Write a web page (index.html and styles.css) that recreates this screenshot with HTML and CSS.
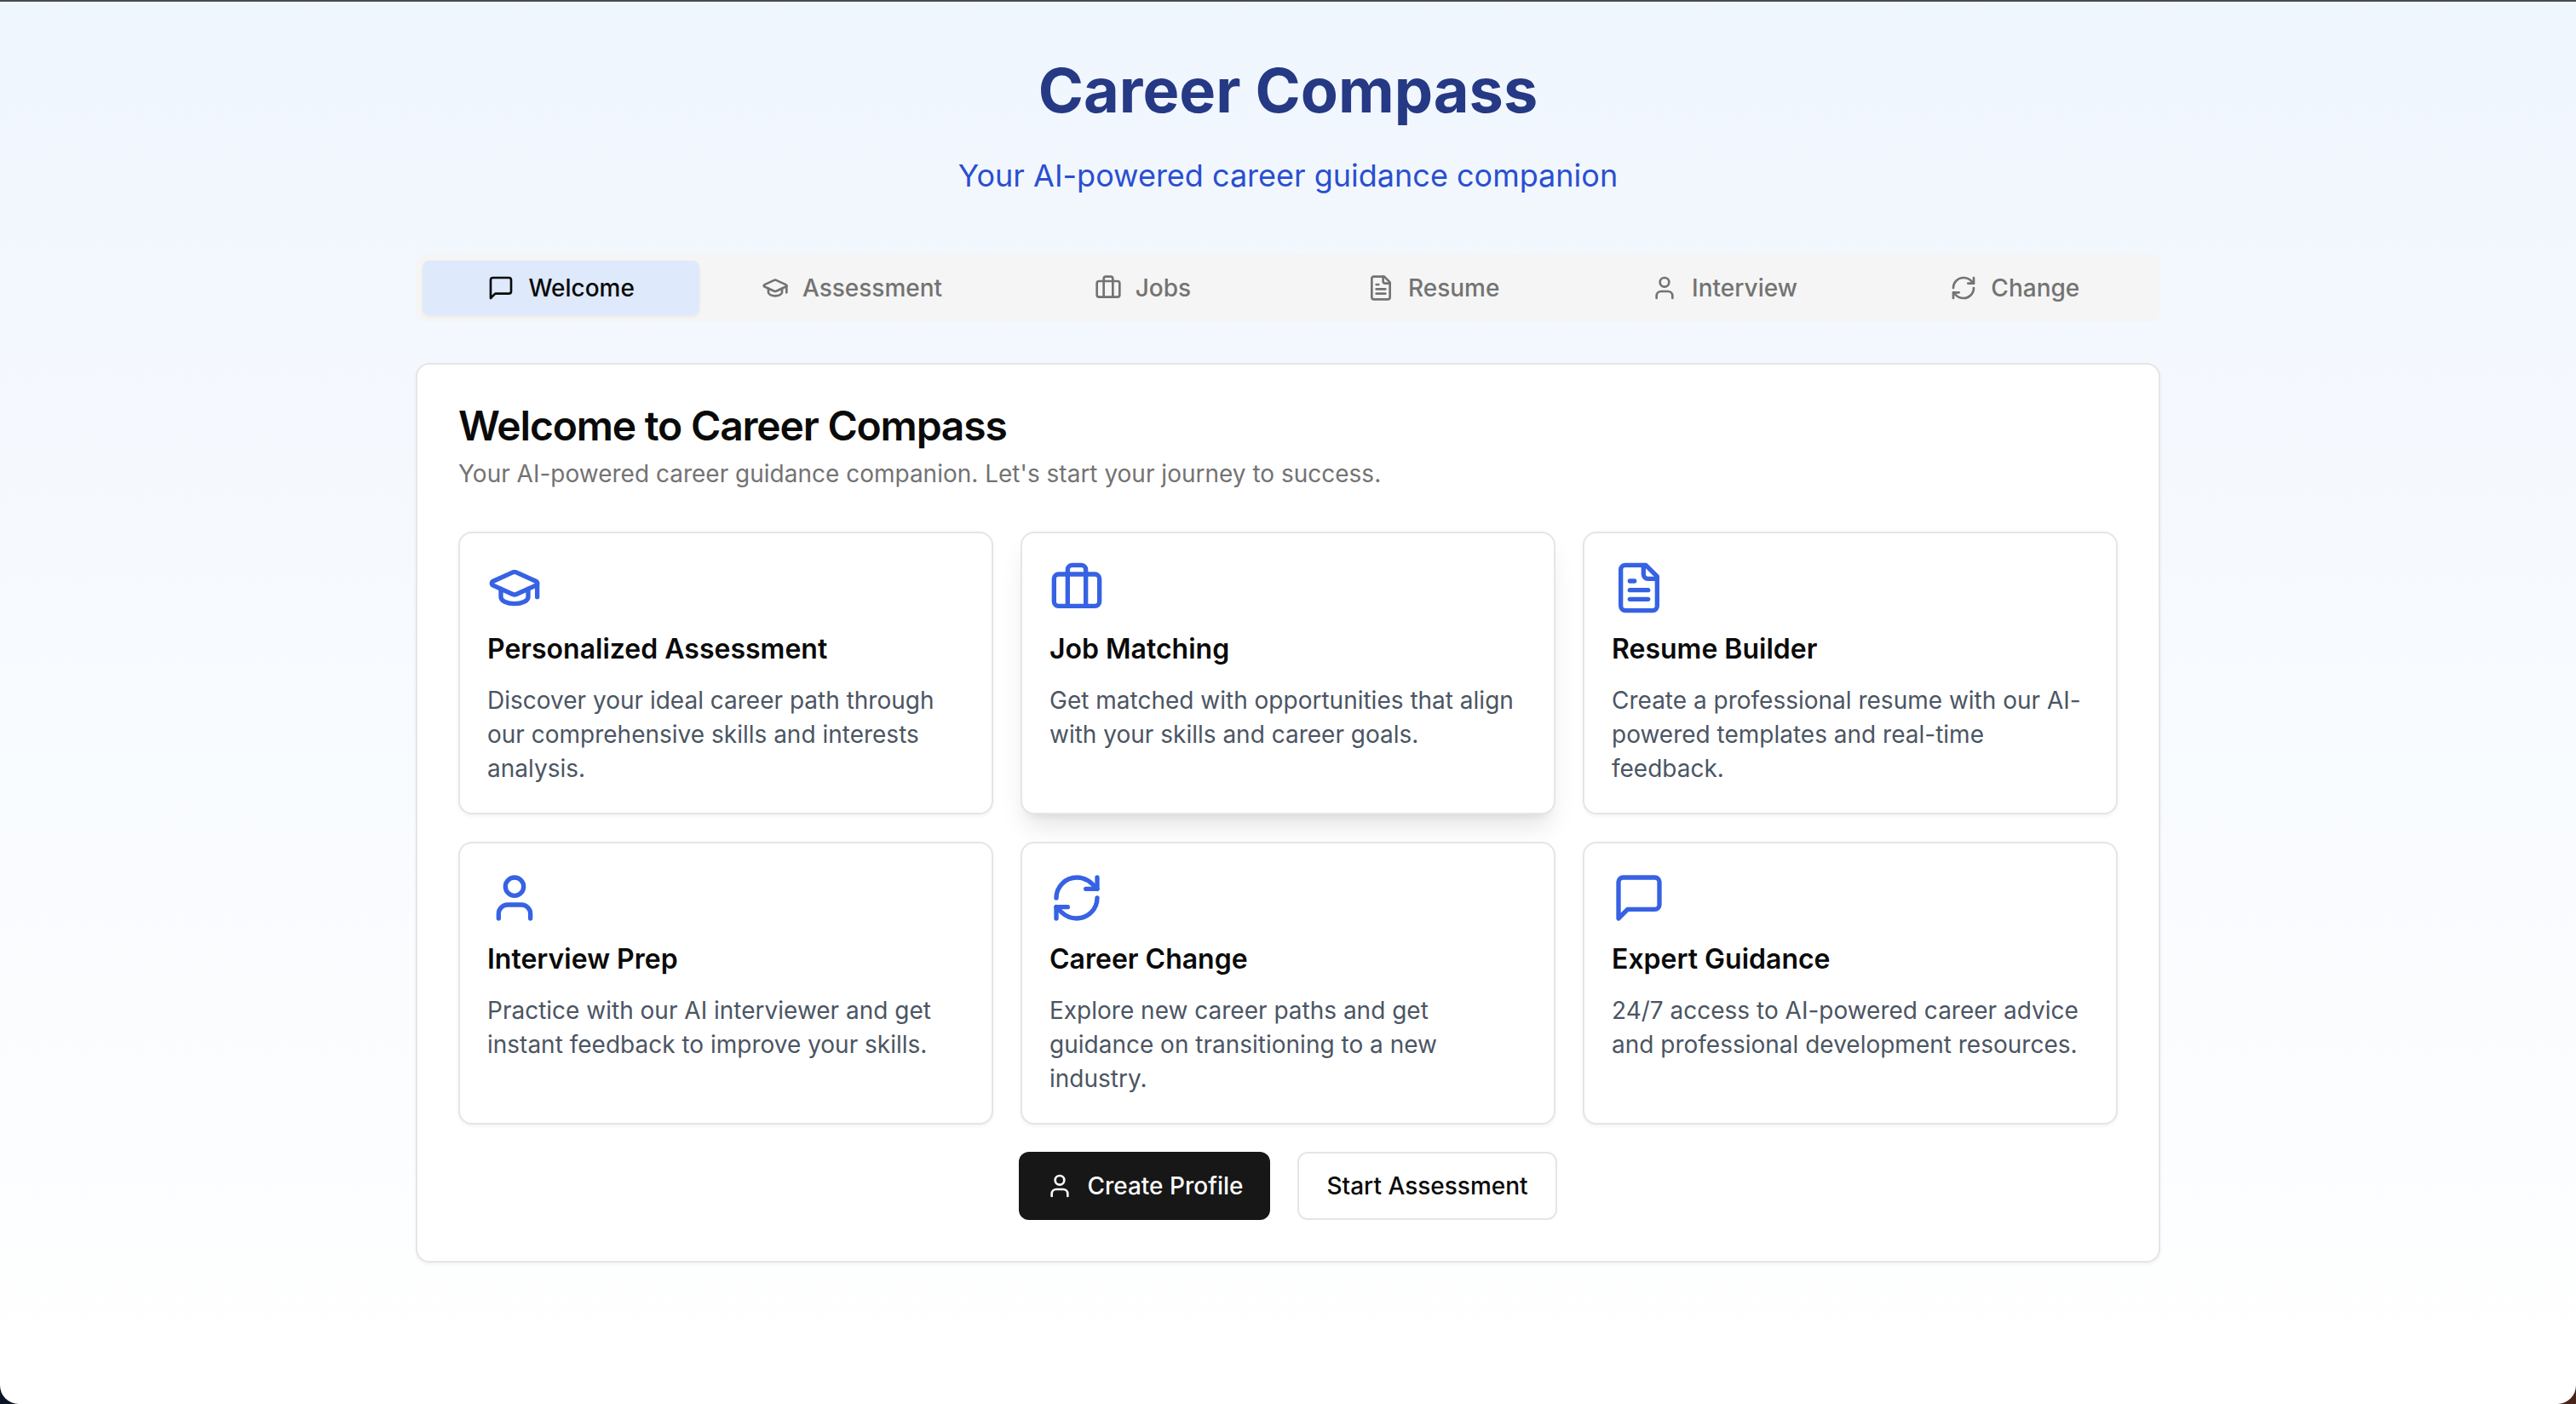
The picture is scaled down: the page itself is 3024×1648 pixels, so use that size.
FILE: index.html
```html
<!DOCTYPE html>
<html lang="en">
<head>
<meta charset="utf-8">
<meta name="viewport" content="width=device-width, initial-scale=1">
<title>Career Compass</title>
<link rel="stylesheet" href="styles.css">
</head>
<body>
<svg class="sprite" aria-hidden="true">
  <symbol id="message" viewBox="0 0 24 24"><path d="M21 15a2 2 0 0 1-2 2H7l-4 4V5a2 2 0 0 1 2-2h14a2 2 0 0 1 2 2z"/></symbol>
  <symbol id="graduation" viewBox="0 0 24 24"><path d="M21.42 10.922a1 1 0 0 0-.019-1.838L12.83 5.18a2 2 0 0 0-1.66 0L2.6 9.08a1 1 0 0 0 0 1.832l8.57 3.908a2 2 0 0 0 1.66 0z"/><path d="M22 10v6"/><path d="M6 12.5V16a6 3 0 0 0 12 0v-3.5"/></symbol>
  <symbol id="briefcase" viewBox="0 0 24 24"><path d="M16 20V4a2 2 0 0 0-2-2h-4a2 2 0 0 0-2 2v16"/><rect width="20" height="14" x="2" y="6" rx="2"/></symbol>
  <symbol id="file" viewBox="0 0 24 24"><path d="M15 2H6a2 2 0 0 0-2 2v16a2 2 0 0 0 2 2h12a2 2 0 0 0 2-2V7Z"/><path d="M14 2v4a2 2 0 0 0 2 2h4"/><path d="M10 9H8"/><path d="M16 13H8"/><path d="M16 17H8"/></symbol>
  <symbol id="user" viewBox="0 0 24 24"><path d="M19 21v-2a4 4 0 0 0-4-4H9a4 4 0 0 0-4 4v2"/><circle cx="12" cy="7" r="4"/></symbol>
  <symbol id="refresh" viewBox="0 0 24 24"><path d="M3 12a9 9 0 0 1 9-9 9.75 9.75 0 0 1 6.74 2.74L21 8"/><path d="M21 3v5h-5"/><path d="M21 12a9 9 0 0 1-9 9 9.75 9.75 0 0 1-6.74-2.74L3 16"/><path d="M8 16H3v5"/></symbol>
</svg>

<div class="page">
  <div class="container">
    <header class="hero">
      <h1 class="hero-title">Career Compass</h1>
      <p class="hero-subtitle">Your AI-powered career guidance companion</p>
    </header>

    <div class="tabs" role="tablist" aria-label="Sections">
      <button class="tab tab-active" type="button" role="tab" aria-selected="true"><svg class="icon" aria-hidden="true"><use href="#message"/></svg>Welcome</button>
      <button class="tab" type="button" role="tab" aria-selected="false"><svg class="icon" aria-hidden="true"><use href="#graduation"/></svg>Assessment</button>
      <button class="tab" type="button" role="tab" aria-selected="false"><svg class="icon" aria-hidden="true"><use href="#briefcase"/></svg>Jobs</button>
      <button class="tab" type="button" role="tab" aria-selected="false"><svg class="icon" aria-hidden="true"><use href="#file"/></svg>Resume</button>
      <button class="tab" type="button" role="tab" aria-selected="false"><svg class="icon" aria-hidden="true"><use href="#user"/></svg>Interview</button>
      <button class="tab" type="button" role="tab" aria-selected="false"><svg class="icon" aria-hidden="true"><use href="#refresh"/></svg>Change</button>
    </div>

    <main class="panel">
      <h2 class="panel-title">Welcome to Career Compass</h2>
      <p class="panel-description">Your AI-powered career guidance companion. Let's start your journey to success.</p>

      <div class="features">
        <article class="feature">
          <svg class="icon icon-large" aria-hidden="true"><use href="#graduation"/></svg>
          <h3 class="feature-title">Personalized Assessment</h3>
          <p class="feature-text">Discover your ideal career path through our comprehensive skills and interests analysis.</p>
        </article>
        <article class="feature feature-raised">
          <svg class="icon icon-large" aria-hidden="true"><use href="#briefcase"/></svg>
          <h3 class="feature-title">Job Matching</h3>
          <p class="feature-text">Get matched with opportunities that align with your skills and career goals.</p>
        </article>
        <article class="feature">
          <svg class="icon icon-large" aria-hidden="true"><use href="#file"/></svg>
          <h3 class="feature-title">Resume Builder</h3>
          <p class="feature-text">Create a professional resume with our AI-powered templates and real-time feedback.</p>
        </article>
        <article class="feature">
          <svg class="icon icon-large" aria-hidden="true"><use href="#user"/></svg>
          <h3 class="feature-title">Interview Prep</h3>
          <p class="feature-text">Practice with our AI interviewer and get instant feedback to improve your skills.</p>
        </article>
        <article class="feature">
          <svg class="icon icon-large" aria-hidden="true"><use href="#refresh"/></svg>
          <h3 class="feature-title">Career Change</h3>
          <p class="feature-text">Explore new career paths and get guidance on transitioning to a new industry.</p>
        </article>
        <article class="feature">
          <svg class="icon icon-large" aria-hidden="true"><use href="#message"/></svg>
          <h3 class="feature-title">Expert Guidance</h3>
          <p class="feature-text">24/7 access to AI-powered career advice and professional development resources.</p>
        </article>
      </div>

      <div class="actions">
        <button class="button button-primary" type="button"><svg class="icon" aria-hidden="true"><use href="#user"/></svg>Create Profile</button>
        <button class="button" type="button">Start Assessment</button>
      </div>
    </main>
  </div>
</div>
</body>
</html>
```

FILE: styles.css
```css
* {
  box-sizing: border-box;
}

html {
  background: linear-gradient(to right, #0b1526, #4a2418);
}

body {
  margin: 0;
  font-family: Inter, "Liberation Sans", sans-serif;
  font-size: 28px;
  line-height: 40px;
  color: #0a0a0a;
}

h1, h2, h3, p {
  margin: 0;
}

button {
  margin: 0;
  font: inherit;
  font-weight: 500;
  cursor: pointer;
}

.sprite {
  display: none;
}

.icon {
  flex: none;
  width: 32px;
  height: 32px;
  fill: none;
  stroke: currentColor;
  stroke-width: 2;
  stroke-linecap: round;
  stroke-linejoin: round;
}

.icon-large {
  display: block;
  width: 64px;
  height: 64px;
  color: #3662e3;
}

.page {
  min-height: 100vh;
  padding: 64px 32px;
  border-top: 2px solid #4a4a4d;
  border-radius: 0 0 22px 22px;
  background: linear-gradient(to bottom, #f0f6fe, #ffffff);
}

.container {
  max-width: 2048px;
  margin: 0 auto;
}

.hero {
  margin-bottom: 64px;
  text-align: center;
}

.hero-title {
  margin-bottom: 32px;
  font-size: 72px;
  font-weight: 700;
  line-height: 80px;
  color: #253985;
}

.hero-subtitle {
  font-size: 36px;
  line-height: 56px;
  color: #2a4fd0;
}

.tabs {
  display: grid;
  grid-template-columns: repeat(6, 1fr);
  gap: 16px;
  margin-bottom: 48px;
  padding: 8px;
  border-radius: 12px;
  background: #f5f5f5;
}

.tab {
  display: flex;
  align-items: center;
  justify-content: center;
  gap: 16px;
  padding: 12px 24px;
  border: 0;
  border-radius: 8px;
  background: transparent;
  color: #737373;
}

.tab-active {
  background: #dee9fb;
  color: #0a0a0a;
  box-shadow: 0 2px 4px rgba(0, 0, 0, 0.05);
}

.panel {
  padding: 48px;
  border: 2px solid #e5e5e5;
  border-radius: 16px;
  background: #ffffff;
  box-shadow: 0 2px 4px rgba(0, 0, 0, 0.05);
}

.panel-title {
  margin-bottom: 12px;
  font-size: 48px;
  font-weight: 600;
  line-height: 48px;
  letter-spacing: -0.025em;
}

.panel-description {
  margin-bottom: 48px;
  color: #737373;
}

.features {
  display: grid;
  grid-template-columns: repeat(3, 1fr);
  gap: 32px;
  margin-bottom: 32px;
}

.feature {
  padding: 32px;
  border: 2px solid #e5e5e5;
  border-radius: 16px;
  background: #ffffff;
  box-shadow: 0 2px 4px rgba(0, 0, 0, 0.05);
}

.feature-raised {
  box-shadow: 0 20px 30px -6px rgba(0, 0, 0, 0.1), 0 8px 12px -8px rgba(0, 0, 0, 0.1);
}

.feature-title {
  margin: 16px 0;
  font-size: 32px;
  font-weight: 600;
  line-height: 48px;
}

.feature-text {
  color: #4b5563;
}

.actions {
  display: flex;
  justify-content: center;
  gap: 32px;
}

.button {
  display: flex;
  align-items: center;
  gap: 16px;
  padding: 18px 32px;
  border: 2px solid #e5e5e5;
  border-radius: 12px;
  background: #ffffff;
  color: #0a0a0a;
}

.button-primary {
  padding: 20px 32px;
  border: 0;
  background: #171717;
  color: #fafafa;
}
```
